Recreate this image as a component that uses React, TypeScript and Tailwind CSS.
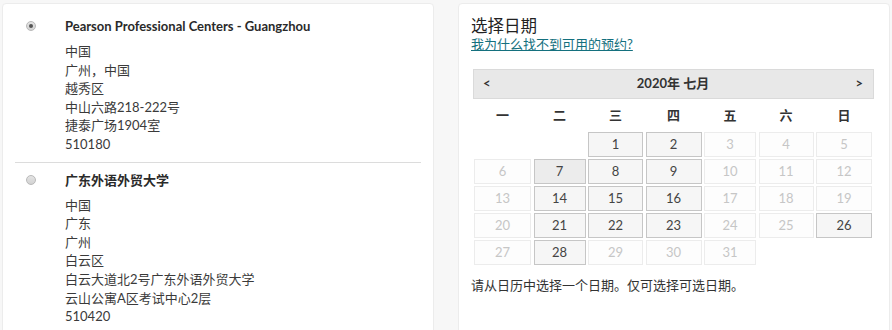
import React from "react";

const font = { fontFamily: 'Lato, "Noto Sans CJK SC", sans-serif' };

type Center = { name: string; lines: string[]; selected?: boolean };

const centers: Center[] = [
  {
    name: "Pearson Professional Centers - Guangzhou",
    lines: ["中国", "广州，中国", "越秀区", "中山六路218-222号", "捷泰广场1904室", "510180"],
    selected: true,
  },
  {
    name: "广东外语外贸大学",
    lines: ["中国", "广东", "广州", "白云区", "白云大道北2号广东外语外贸大学", "云山公寓A区考试中心2层", "510420"],
  },
];

const weekdays = ["一", "二", "三", "四", "五", "六", "日"];
const available = new Set([1, 2, 7, 8, 9, 14, 15, 16, 21, 22, 23, 26, 28]);

function Radio({ checked }: { checked?: boolean }) {
  return (
    <span className="mt-[4px] ml-[11px] flex h-[10px] w-[10px] items-center justify-center rounded-full border border-[#b9b9b9] bg-gradient-to-b from-[#e4e4e4] to-[#d2d2d2]">
      {checked && <span className="h-[4px] w-[4px] rounded-full bg-[#555]" />}
    </span>
  );
}

function CenterItem({ center, first }: { center: Center; first?: boolean }) {
  return (
    <div className={`flex ${first ? "pt-[13px] pb-[8px] border-b border-[#dcdcdc]" : "pt-[8px]"}`}>
      <div className="w-[50px] shrink-0">
        <Radio checked={center.selected} />
      </div>
      <div>
        <div className="mb-[7px] text-[13px] font-bold leading-[18px] text-[#2a2a2a]">{center.name}</div>
        {center.lines.map((line) => (
          <div key={line} className="text-[13px] leading-[18.6px] text-[#3a3a3a]">
            {line}
          </div>
        ))}
      </div>
    </div>
  );
}

function Calendar() {
  const cells: Array<number | null> = [null, null, ...Array.from({ length: 31 }, (_, i) => i + 1)];

  return (
    <div className="ml-[2px] w-[401px]">
      <div className="flex h-[30px] items-center justify-between border border-[#dadada] bg-[#e8e8e8] pl-[9px] pr-[10px] text-[13px] font-bold text-[#333]">
        <span>&lt;</span>
        <span>2020年 七月</span>
        <span>&gt;</span>
      </div>
      <div className="ml-[1px] grid grid-cols-[57px_52px_55px_56px_52px_55px_56px] gap-x-[2.5px]">
        {weekdays.map((d) => (
          <div key={d} className="flex h-[33px] items-center justify-center text-[13px] font-bold text-[#333]">
            {d}
          </div>
        ))}
      </div>
      <div className="ml-[1px] grid grid-cols-[57px_52px_55px_56px_52px_55px_56px] gap-x-[2.5px] gap-y-[2px]">
        {cells.map((day, i) => {
          if (day === null) return <div key={`e${i}`} className="h-[25px]" />;
          const ok = available.has(day);
          return (
            <div
              key={day}
              className={`flex h-[25px] items-center justify-center border text-[13px] ${
                ok
                  ? `border-[#c6c6c6] text-[#444] ${day === 7 ? "bg-[#ececec]" : "bg-[#f6f6f6]"}`
                  : "border-[#ececec] bg-[#fdfdfd] text-[#c6c6c6]"
              }`}
            >
              {day}
            </div>
          );
        })}
      </div>
    </div>
  );
}

export default function App() {
  return (
    <div className="h-[330px] w-[892px] overflow-hidden bg-[#f7f7f7]" style={font}>
      <div className="flex gap-[24px] pl-[2px] pt-[3px]">
        <section className="h-[340px] w-[432px] rounded-[4px] border border-[#ececec] bg-white px-[12px]">
          {centers.map((c, i) => (
            <CenterItem key={c.name} center={c} first={i === 0} />
          ))}
        </section>

        <section className="h-[340px] w-[432px] rounded-[4px] border border-[#ececec] bg-white pl-[12px] pt-[11px]">
          <h2 className="text-[16.5px] leading-[22px] text-[#222]">选择日期</h2>
          <a href="#" className="-mt-[1px] block w-fit text-[13px] leading-[16px] text-[#14707e] underline">
            我为什么找不到可用的预约?
          </a>
          <div className="mt-[17px]">
            <Calendar />
          </div>
          <p className="mt-[11px] text-[13px] leading-[18px] text-[#333]">请从日历中选择一个日期。仅可选择可选日期。</p>
        </section>
      </div>
    </div>
  );
}
